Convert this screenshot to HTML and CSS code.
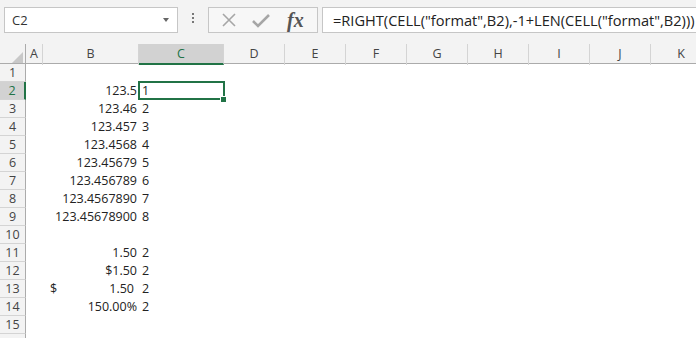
FILE: index.html
```html
<!DOCTYPE html>
<html lang="en">
<head>
  <meta charset="UTF-8">
  <title>Sheet</title>
  <link rel="stylesheet" href="styles.css">
</head>
<body>

<!-- Barra de fórmulas -->
<div class="toolbar">
  <div class="namebox">
    <span>C2</span>
    <span class="arrow"></span>
  </div>
  <div class="dots"><i></i><i></i><i></i></div>
  <div class="fxbox">
    <svg class="ico" width="16" height="16" viewBox="0 0 16 16">
      <path d="M2 2 L14 14 M14 2 L2 14" stroke="#a6a6a6" stroke-width="1.6" fill="none"/>
    </svg>
    <svg class="ico" width="20" height="16" viewBox="0 0 20 16">
      <path d="M2 9 L7 14 L18 3" stroke="#a6a6a6" stroke-width="2.6" fill="none"/>
    </svg>
    <span class="fx">fx</span>
  </div>
  <div class="formula">=RIGHT(CELL("format",B2),-1+LEN(CELL("format",B2)))</div>
</div>

<!-- Cabeceras de columnas -->
<div class="colheads">
  <div class="corner"><span class="tri"></span></div>
  <div>A</div>
  <div>B</div>
  <div class="active">C</div>
  <div>D</div>
  <div>E</div>
  <div>F</div>
  <div>G</div>
  <div>H</div>
  <div>I</div>
  <div>J</div>
  <div>K</div>
</div>

<!-- Filas -->
<div class="sheet">
  <div class="row"><div class="rh">1</div><div></div><div class="b"></div><div class="c"></div></div>
  <div class="row"><div class="rh active">2</div><div></div><div class="b">123.5</div><div class="c sel">1</div></div>
  <div class="row"><div class="rh">3</div><div></div><div class="b">123.46</div><div class="c">2</div></div>
  <div class="row"><div class="rh">4</div><div></div><div class="b">123.457</div><div class="c">3</div></div>
  <div class="row"><div class="rh">5</div><div></div><div class="b">123.4568</div><div class="c">4</div></div>
  <div class="row"><div class="rh">6</div><div></div><div class="b">123.45679</div><div class="c">5</div></div>
  <div class="row"><div class="rh">7</div><div></div><div class="b">123.456789</div><div class="c">6</div></div>
  <div class="row"><div class="rh">8</div><div></div><div class="b">123.4567890</div><div class="c">7</div></div>
  <div class="row"><div class="rh">9</div><div></div><div class="b">123.45678900</div><div class="c">8</div></div>
  <div class="row"><div class="rh">10</div><div></div><div class="b"></div><div class="c"></div></div>
  <div class="row"><div class="rh">11</div><div></div><div class="b">1.50</div><div class="c">2</div></div>
  <div class="row"><div class="rh">12</div><div></div><div class="b">$1.50</div><div class="c">2</div></div>
  <div class="row"><div class="rh">13</div><div></div><div class="b acct"><span>$</span><span>1.50</span></div><div class="c">2</div></div>
  <div class="row"><div class="rh">14</div><div></div><div class="b">150.00%</div><div class="c">2</div></div>
  <div class="row"><div class="rh">15</div><div></div><div class="b"></div><div class="c"></div></div>
  <div class="row"><div class="rh"></div><div></div><div class="b"></div><div class="c"></div></div>
</div>

</body>
</html>
```

FILE: styles.css
```css
body {
  margin: 0;
  font-family: "Open Sans", "Liberation Sans", sans-serif;
  font-size: 12.5px;
  color: #222;
  background-color: #fff;
  overflow: hidden;
  width: 696px;
  height: 338px;
}

/* Barra superior */
.toolbar {
  height: 44px;
  background-color: #f3f3f3;
  display: flex;
  align-items: flex-start;
  padding-top: 7px;
  box-sizing: border-box;
}

.namebox {
  margin-left: 4px;
  width: 174px;
  height: 26px;
  box-sizing: border-box;
  background-color: #fff;
  border: 1px solid #c6c6c6;
  display: flex;
  align-items: center;
  justify-content: space-between;
  padding: 0 8px 0 7px;
  font-size: 13px;
  color: #333;
}

.namebox .arrow {
  width: 0;
  height: 0;
  border-left: 3.5px solid transparent;
  border-right: 3.5px solid transparent;
  border-top: 4px solid #666;
}

.dots {
  width: 30px;
  display: flex;
  flex-direction: column;
  align-items: center;
  gap: 2px;
  padding-top: 6px;
}

.dots i {
  display: block;
  width: 2px;
  height: 2px;
  background-color: #777;
}

.fxbox {
  width: 110px;
  height: 26px;
  box-sizing: border-box;
  border: 1px solid #c6c6c6;
  background-color: #f7f7f7;
  display: flex;
  align-items: center;
  padding-left: 12px;
  gap: 14px;
}

.fx {
  font-family: "Liberation Serif", serif;
  font-style: italic;
  font-weight: bold;
  font-size: 20px;
  color: #555;
  margin-left: 2px;
}

.formula {
  flex: 1;
  height: 26px;
  margin-left: 4px;
  box-sizing: border-box;
  border: 1px solid #c6c6c6;
  border-right: none;
  background-color: #fff;
  padding-left: 10px;
  line-height: 24px;
  font-size: 14.6px;
  color: #222;
  white-space: nowrap;
}

/* Cabeceras */
.colheads {
  display: grid;
  grid-template-columns: 26px 17px 96px 85px repeat(8, 61px);
  height: 19px;
  background-color: #f3f3f3;
  border-bottom: 1px solid #ababab;
}

.colheads div {
  border-right: 1px solid #d4d4d4;
  text-align: center;
  line-height: 19px;
  color: #444;
}

.colheads .corner {
  position: relative;
  border-right: 1px solid #ababab;
}

.corner .tri {
  position: absolute;
  right: 2px;
  bottom: 2px;
  width: 0;
  height: 0;
  border-left: 11px solid transparent;
  border-bottom: 11px solid #c8c8c8;
}

.colheads .active {
  background-color: #d2d2d2;
  border-bottom: 2px solid #217346;
  line-height: 19px;
  color: #217346;
}

/* Filas */
.row {
  display: grid;
  grid-template-columns: 26px 17px 96px 85px;
  height: 18px;
  line-height: 18px;
}

.rh {
  background-color: #f3f3f3;
  border-right: 1px solid #ababab;
  border-bottom: 1px solid #d4d4d4;
  box-sizing: border-box;
  text-align: center;
  color: #444;
  line-height: 17px;
}

.rh.active {
  background-color: #d2d2d2;
  border-right: 2px solid #217346;
  color: #217346;
}

.b {
  text-align: right;
  padding-right: 2px;
}

.c {
  padding-left: 3px;
}

.b.acct {
  display: flex;
  justify-content: space-between;
  padding-left: 7px;
  padding-right: 5px;
}

.c.sel {
  position: relative;
}

.c.sel::after {
  content: "";
  position: absolute;
  left: -1px;
  top: -1px;
  right: -1px;
  bottom: 0;
  border: 2px solid #217346;
}

.c.sel::before {
  content: "";
  position: absolute;
  right: -3px;
  bottom: -3px;
  width: 5px;
  height: 5px;
  background-color: #217346;
  border: 1px solid #fff;
  z-index: 1;
}
```
